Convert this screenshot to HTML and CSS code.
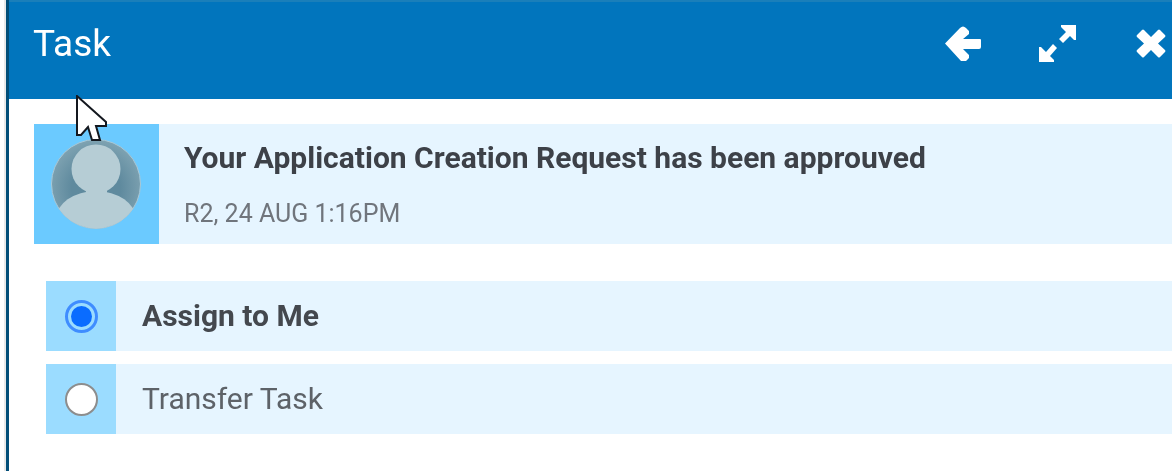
FILE: index.html
```html
<!DOCTYPE html>
<html lang="en">
<head>
<meta charset="utf-8">
<title>Task</title>
<link rel="stylesheet" href="styles.css">
</head>
<body>
<div class="window">
  <header class="titlebar">
    <h1 class="title">Task</h1>
    <div class="actions">
      <svg class="icon icon-back" viewBox="0 0 36 35"><path d="M0 17.5 L15 2 Q18 -1 21 2 L24 5 V8 L18 13 H35 Q36 13 36 14 V21 Q36 23 34 23 H18 L24 29 V32 L21 35 H16 Z" fill="#fff"/></svg>
      <svg class="icon icon-expand" viewBox="0 0 37 37"><path d="M22 0 H37 V15 H35 L31 11 L24 18 L20 14 L27 7 L22 2 Z M0 22 H2 L7 27 L14 19 L18 23 L11 31 L15 35 V37 H0 Z" fill="#fff"/></svg>
      <svg class="icon icon-close" viewBox="0 0 30 29"><path d="M1 8 Q0 7 1 6 L6 1 Q7 0 8 1 L15 8 L22 1 Q23 0 24 1 L29 6 Q30 7 29 8 L22 14.500 L29 21 Q30 22 29 23 L24 28 Q23 29 22 28 L15 21 L8 28 Q7 29 6 28 L1 23 Q0 22 1 21 L8 14.500 Z" fill="#fff"/></svg>
    </div>
  </header>
  <main class="content">
    <section class="notice">
      <div class="avatar-box">
        <svg class="avatar" viewBox="0 0 90 90">
          <defs>
            <clipPath id="c"><circle cx="45" cy="45" r="44.500"/></clipPath>
            <radialGradient id="g" cx="50%" cy="55%" r="55%">
              <stop offset="0.5" stop-color="#5f8a9e"/>
              <stop offset="1" stop-color="#7fa3b2"/>
            </radialGradient>
          </defs>
          <circle cx="45" cy="45" r="44.500" fill="url(#g)" stroke="#a9c8d6" stroke-width="1"/>
          <g clip-path="url(#c)" fill="#b6cdd5">
            <circle cx="45" cy="30" r="24.500"/>
            <ellipse cx="45" cy="80" rx="40" ry="28"/>
            <rect x="35" y="45" width="21" height="20"/>
          </g>
        </svg>
      </div>
      <div class="notice-text">
        <p class="notice-title">Your Application Creation Request has been approuved</p>
        <p class="notice-meta">R2, 24 AUG 1:16PM</p>
      </div>
    </section>
    <div class="options">
      <label class="option">
        <span class="radio-box"><span class="radio radio-on"></span></span>
        <span class="option-label option-strong">Assign to Me</span>
      </label>
      <label class="option">
        <span class="radio-box"><span class="radio"></span></span>
        <span class="option-label">Transfer Task</span>
      </label>
    </div>
  </main>
  <svg class="cursor" viewBox="0 0 31 46"><path d="M1 1 V40 H5 L12 32 L16 45 H24 L20 31 H30 V27 Z" fill="#fff" stroke="#14181f" stroke-width="2"/></svg>
</div>
</body>
</html>
```
FILE: styles.css
```css
* { box-sizing: border-box; }
html, body { margin: 0; height: 100%; overflow: hidden; background: #fff; }
body { font-family: Roboto, "Liberation Sans", sans-serif; }
.window {
  position: relative;
  height: 471px;
  margin-left: 6px;
  border-left: 3px solid #024e78;
  box-shadow: -2px 0 0 #e9e9e9;
  background: #fff;
}
.titlebar {
  height: 99px;
  background: #0175bd;
  border-top: 2px solid #1a7fba;
  display: flex;
  align-items: center;
  justify-content: space-between;
  padding: 0 6px 14px 24px;
}
.title {
  margin: 0;
  font-size: 37px;
  font-weight: 400;
  color: #fff;
  line-height: 1;
}
.actions { display: flex; align-items: center; }
.icon { display: block; flex: none; }
.icon-back { width: 36px; height: 35px; margin-right: 58px; }
.icon-expand { width: 37px; height: 37px; margin-right: 60px; }
.icon-close { width: 30px; height: 29px; }
.content { padding: 25px 0 0 25px; }
.notice {
  display: flex;
  height: 120px;
  background: #e6f5ff;
}
.avatar-box {
  width: 125px;
  flex: none;
  background: #6bcaff;
  padding: 15px 0 0 17px;
}
.avatar { width: 90px; height: 90px; display: block; }
.notice-text { padding: 16px 0 0 25px; }
.notice-title {
  margin: 0;
  font-size: 30px;
  font-weight: 700;
  color: #3d4148;
  line-height: 35px;
  white-space: nowrap;
}
.notice-meta {
  margin: 26px 0 0;
  font-size: 25px;
  color: #70757c;
  line-height: 26px;
  white-space: nowrap;
}
.options {
  display: flex;
  flex-direction: column;
  gap: 13px;
  margin: 37px 0 0 12px;
}
.option { display: flex; height: 70px; background: #e6f5ff; }
.radio-box {
  width: 70px;
  flex: none;
  background: #9bdcff;
  display: flex;
  align-items: center;
  justify-content: center;
  padding-left: 1px;
}
.radio {
  width: 33px;
  height: 33px;
  border-radius: 50%;
  border: 2px solid #8d8d8d;
  background: #fff;
}
.radio-on {
  border: 3px solid #3f8dff;
  background: #0a6cff content-box;
  padding: 3px;
}
.option-label {
  padding-left: 26px;
  font-size: 30px;
  line-height: 70px;
  color: #5d6268;
  white-space: nowrap;
}
.option-strong { font-weight: 700; color: #44484e; }
.title, .notice-title, .notice-meta, .option-label { filter: blur(0.5px); }
.cursor {
  position: absolute;
  left: 67px;
  top: 95px;
  width: 31px;
  height: 46px;
}
```
